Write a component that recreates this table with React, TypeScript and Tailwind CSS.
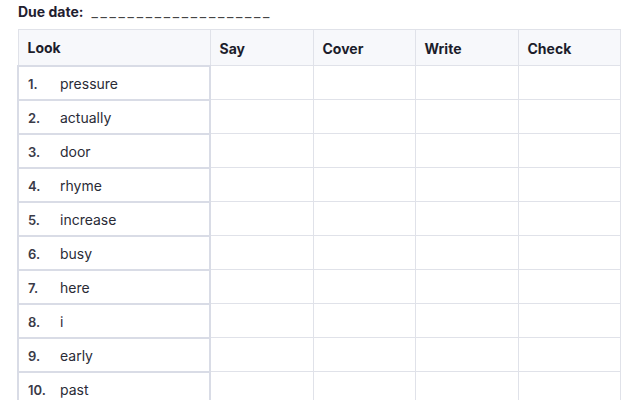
const words = ['pressure', 'actually', 'door', 'rhyme', 'increase', 'busy', 'here', 'i', 'early', 'past'];

export default function App() {
  return (
    <div className="w-[640px] h-[400px] overflow-hidden bg-white font-['Inter',sans-serif] text-[#1f2030]">
      <div className="pl-[18px] h-[29px] flex items-start gap-[8px] text-[14px]">
        <span className="font-bold leading-[23px]">Due date:</span>
        <span className="text-[#444] leading-[23px] tracking-[2.65px]">____________________</span>
      </div>
      <table className="ml-[17px] border-collapse table-fixed w-[602px] text-[14px]">
        <colgroup>
          <col className="w-[192px]" />
          <col className="w-[103px]" />
          <col className="w-[102px]" />
          <col className="w-[103px]" />
          <col className="w-[102px]" />
        </colgroup>
        <thead>
          <tr className="h-[36px] bg-[#f7f8fb]">
            {['Look', 'Say', 'Cover', 'Write', 'Check'].map((h) => (
              <th key={h} className="border border-[#e0e2e9] text-left font-bold px-[9px] pt-[1px] text-[#1c1d2b]">
                {h}
              </th>
            ))}
          </tr>
        </thead>
        <tbody>
          {words.map((w, i) => (
            <tr key={w} className="h-[34px]">
              <td className="border-2 border-[#d9dce6] px-[9px] pt-[3px]">
                <div className="flex items-baseline">
                  <span className="w-[32px] font-semibold text-[#3a3b48] text-[13px]">{i + 1}.</span>
                  <span className="text-[#2a2b36]">{w}</span>
                </div>
              </td>
              <td className="border border-[#e0e2e9]" />
              <td className="border border-[#e0e2e9]" />
              <td className="border border-[#e0e2e9]" />
              <td className="border border-[#e0e2e9]" />
            </tr>
          ))}
        </tbody>
      </table>
    </div>
  );
}
